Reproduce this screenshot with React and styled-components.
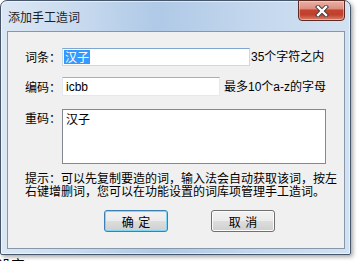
import styled, { createGlobalStyle } from 'styled-components';

const GlobalStyle = createGlobalStyle`
    body {
        margin: 0;
        background: #ffffff;
        font-family: 'Liberation Sans', 'Noto Sans CJK SC', sans-serif;
        overflow: hidden;
    }
`;

const Page = styled.div`
    display: flex;
    flex-direction: column;
    width: 361px;
    height: 261px;
`;

const Window = styled.div`
    box-sizing: border-box;
    width: 351px;
    height: 255px;
    flex-shrink: 0;
    border: 1px solid #46576b;
    border-radius: 7px 7px 2px 2px;
    padding: 0 5px 5px 6px;
    display: flex;
    flex-direction: column;
    background: linear-gradient(
        to right,
        #dce7f4 0%,
        #c8daef 22%,
        #afc9e6 45%,
        #c2d6ed 70%,
        #d3e2f2 100%
    );
    box-shadow: 2px 2px 4px rgba(0, 0, 0, 0.35), inset 0 0 0 1px rgba(255, 255, 255, 0.55);
`;

const TitleBar = styled.div`
    height: 30px;
    display: flex;
    justify-content: space-between;
    align-items: flex-start;
`;

const Title = styled.div`
    padding: 8px 0 0 1px;
    font-family: 'Noto Sans CJK SC', sans-serif;
    font-size: 12px;
    line-height: 16px;
    color: #1e1e1e;
`;

const CloseButton = styled.div`
    box-sizing: border-box;
    width: 47px;
    height: 21px;
    margin-top: -1px;
    border: 1px solid #5b2a25;
    border-radius: 0 0 4px 4px;
    display: flex;
    align-items: center;
    justify-content: center;
    background: linear-gradient(
        #e9b1a4 0%,
        #dc8f80 40%,
        #c5442f 48%,
        #c0402e 72%,
        #d9826a 100%
    );
    box-shadow: inset 0 0 0 1px rgba(255, 220, 210, 0.5);
`;

const Client = styled.div`
    box-sizing: border-box;
    flex: 1;
    border: 1px solid #8797ab;
    background: #f0f0f0;
    padding: 16px 0 0 17px;
    display: flex;
    flex-direction: column;
    font-size: 12px;
    color: #000;
`;

const Row = styled.div`
    display: flex;
    align-items: ${({ top }) => (top ? 'flex-start' : 'center')};
    margin-top: ${({ gap }) => gap || 0}px;
`;

const Label = styled.div`
    width: 37px;
    flex-shrink: 0;
    font-family: 'Noto Sans CJK SC', sans-serif;
    line-height: 16px;
    padding-top: ${({ top }) => (top ? 1 : 0)}px;
`;

const Field = styled.div`
    box-sizing: border-box;
    width: ${({ w }) => w}px;
    height: ${({ h }) => h}px;
    background: #fff;
    border: 1px solid ${({ focused }) => (focused ? '#c5daed' : '#e3e9ef')};
    border-top-color: ${({ focused }) => (focused ? '#7ea6d0' : '#abadb3')};
    padding: 0 0 0 1px;
    display: flex;
    align-items: center;
    line-height: 14px;
`;

const Selected = styled.span`
    background: #3399ff;
    color: #fff;
    padding: 0 1px;
    font-family: 'Noto Sans CJK SC', sans-serif;
`;

const Code = styled.span`
    padding-left: 2px;
    color: #000;
`;

const Suffix = styled.div`
    margin-left: ${({ gap }) => gap}px;
    line-height: 16px;
    white-space: nowrap;
`;

const TextArea = styled.div`
    box-sizing: border-box;
    width: 264px;
    height: 55px;
    background: #fff;
    border: 1px solid #828790;
    padding: 2px 3px;
    font-family: 'Noto Sans CJK SC', sans-serif;
    line-height: 14px;
`;

const Hint = styled.div`
    margin-top: 8px;
    display: flex;
    flex-direction: column;
    font-family: 'Noto Sans CJK SC', sans-serif;
    white-space: nowrap;
`;

const HintLine = styled.div`
    height: 12px;
    line-height: 12px;
    & + & {
        margin-top: 1px;
    }
`;

const Buttons = styled.div`
    display: flex;
    gap: 43px;
    margin-top: 13px;
    padding-left: 79px;
`;

const Button = styled.div`
    box-sizing: border-box;
    width: 64px;
    height: 22px;
    border-radius: 3px;
    border: 1px solid ${({ primary }) => (primary ? '#3c7fb1' : '#707070')};
    background: linear-gradient(#f2f2f2 0%, #ebebeb 50%, #dddddd 51%, #cfcfcf 100%);
    box-shadow: inset 0 0 0 1px ${({ primary }) => (primary ? '#7fd7f5' : '#fbfbfb')};
    display: flex;
    align-items: center;
    justify-content: center;
    font-family: 'Noto Sans CJK SC', sans-serif;
    font-size: 12px;
    word-spacing: 2px;
    white-space: pre;
`;

const Behind = styled.div`
    margin: 1px 0 0 -3px;
    font-family: 'Noto Sans CJK SC', sans-serif;
    font-size: 14px;
    line-height: 16px;
    color: #000;
`;

const CloseIcon = () => (
    <svg width="14" height="12" viewBox="0 0 14 12">
        <path d="M3 2 L11 10 M11 2 L3 10" stroke="#3a3a3a" strokeWidth="4.2" strokeLinecap="square" />
        <path d="M3 2 L11 10 M11 2 L3 10" stroke="#ffffff" strokeWidth="2.4" strokeLinecap="square" />
    </svg>
);

export default function App() {
    return (
        <Page>
            <GlobalStyle />
            <Window>
                <TitleBar>
                    <Title>添加手工造词</Title>
                    <CloseButton>
                        <CloseIcon />
                    </CloseButton>
                </TitleBar>
                <Client>
                    <Row>
                        <Label>词条：</Label>
                        <Field w={188} h={18} focused>
                            <Selected>汉子</Selected>
                        </Field>
                        <Suffix gap={1}>35个字符之内</Suffix>
                    </Row>
                    <Row gap={11}>
                        <Label>编码：</Label>
                        <Field w={158} h={19}>
                            <Code>icbb</Code>
                        </Field>
                        <Suffix gap={4}>最多10个a-z的字母</Suffix>
                    </Row>
                    <Row gap={13} top>
                        <Label top>重码：</Label>
                        <TextArea>汉子</TextArea>
                    </Row>
                    <Hint>
                        <HintLine>提示：可以先复制要造的词，输入法会自动获取该词，按左</HintLine>
                        <HintLine>右键增删词，您可以在功能设置的词库项管理手工造词。</HintLine>
                    </Hint>
                    <Buttons>
                        <Button primary>确 定</Button>
                        <Button>取 消</Button>
                    </Buttons>
                </Client>
            </Window>
            <Behind>设定</Behind>
        </Page>
    );
}
